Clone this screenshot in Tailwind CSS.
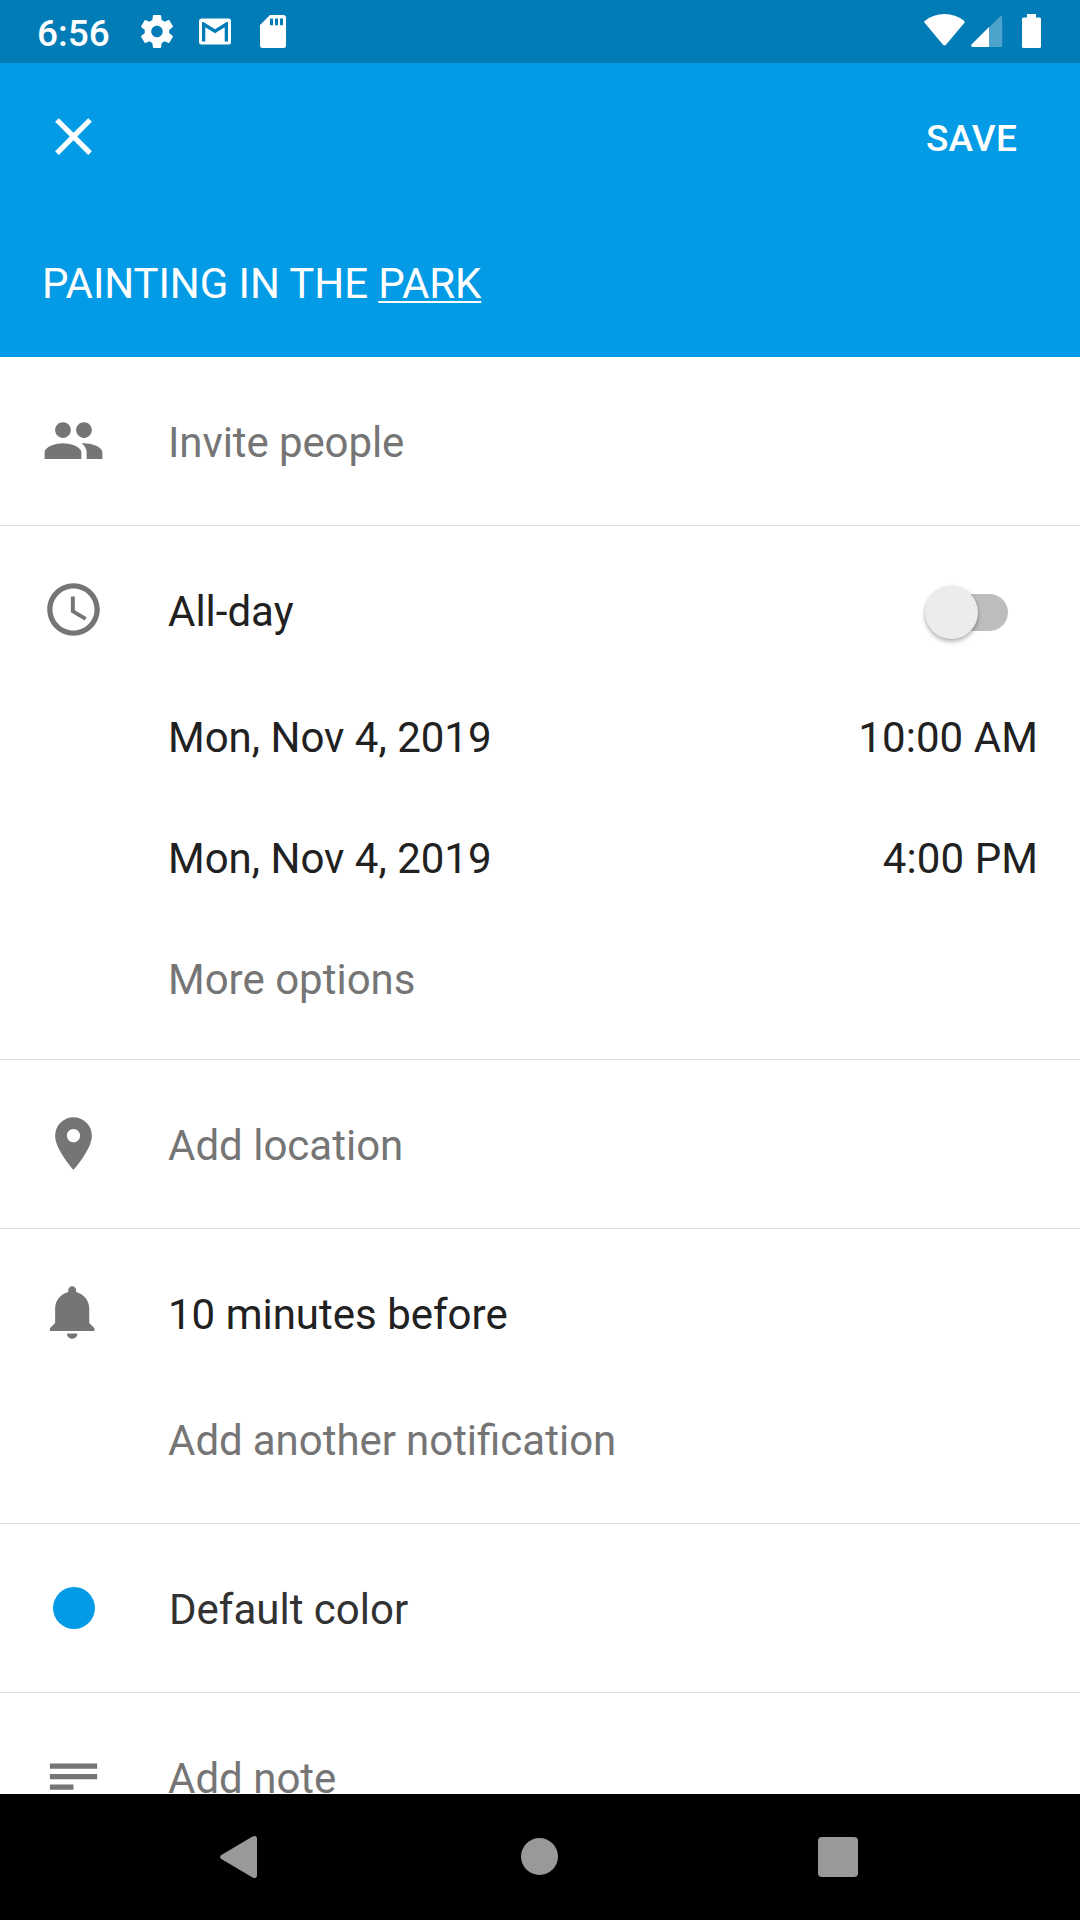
<!DOCTYPE html>
<html lang="en">
<head>
<meta charset="utf-8">
<title>Edit event</title>
<script src="https://cdn.jsdelivr.net/npm/@tailwindcss/browser@4"></script>
</head>
<body class="bg-white">
<div class="flex h-[1920px] w-[1080px] flex-col overflow-hidden bg-white font-[Roboto,sans-serif] text-[42px] leading-[49px] text-[#212121]">

  <!-- Status bar -->
  <div class="flex h-[63px] shrink-0 items-start bg-[#027cb7] pl-[37px] pr-[39px] text-white">
    <span class="mt-[12px] w-[104px] text-[37px] font-medium leading-[43px]">6:56</span>
    <svg class="mt-[15px] h-[33px] w-[32px]" viewBox="2.2 2 19.6 20" preserveAspectRatio="none" fill="currentColor"><path d="M19.43 12.98c.04-.32.07-.64.07-.98s-.03-.66-.07-.98l2.11-1.65c.19-.15.24-.42.12-.64l-2-3.46c-.12-.22-.39-.3-.61-.22l-2.49 1c-.52-.4-1.08-.73-1.69-.98l-.38-2.65C14.46 2.18 14.25 2 14 2h-4c-.25 0-.46.18-.49.42l-.38 2.65c-.61.25-1.17.59-1.69.98l-2.49-1c-.23-.09-.49 0-.61.22l-2 3.46c-.13.22-.07.49.12.64l2.11 1.65c-.04.32-.07.65-.07.98s.03.66.07.98l-2.11 1.65c-.19.15-.24.42-.12.64l2 3.46c.12.22.39.3.61.22l2.49-1c.52.4 1.08.73 1.69.98l.38 2.65c.03.24.24.42.49.42h4c.25 0 .46-.18.49-.42l.38-2.65c.61-.25 1.17-.59 1.69-.98l2.49 1c.23.09.49 0 .61-.22l2-3.46c.12-.22.07-.49-.12-.64l-2.11-1.65zM12 15.5c-1.930 0-3.500-1.570-3.500-3.500s1.570-3.500 3.500-3.500 3.500 1.570 3.500 3.500-1.570 3.500-3.500 3.500z"/></svg>
    <svg class="ml-[26px] mt-[18px] h-[27px] w-[32px]" viewBox="0 0 32 27" fill="currentColor"><path fill-rule="evenodd" d="M3 .5H29.500Q32 .5 32 3V24Q32 26.500 29.500 26.500H2.500Q0 26.500 0 24V3Q0 .5 3 .5ZM3 4V23.500H6.300V9.200L16 15.200L25.700 9.200V23.500H29V4.200L27.600 3.900L16 11.300L4.400 3.900Z"/></svg>
    <svg class="ml-[29px] mt-[15px] h-[33px] w-[26px]" viewBox="0 0 26 33" fill="currentColor"><path fill-rule="evenodd" d="M10 0H23.500Q26 0 26 2.500V30.500Q26 33 23.500 33H2.500Q0 33 0 30.500V10ZM10 3.500V10.300H13V3.500ZM15 3.500V10.300H18V3.500ZM20 3.500V10.300H23V3.500Z"/></svg>
    <svg class="ml-auto mt-[14px] h-[32px] w-[41px]" viewBox="0 0 41 32" fill="currentColor"><path d="M.8 9Q-.3 7.800 1 6.700Q9.500 0 20.500 0T40 6.700Q41.300 7.800 40.200 9L22 30.800Q20.500 32.300 19 30.800Z"/></svg>
    <svg class="ml-[6px] mt-[16px] h-[31px] w-[32px]" viewBox="0 0 32 31" fill="currentColor"><path fill-opacity=".3" d="M18 11.500L28.800 .7Q31.200-.9 31.200 1.500V29.500Q31.200 31 29.700 31H18Z"/><path d="M18 11V31H1.500Q-.5 30.500 .5 28.500Z"/></svg>
    <svg class="ml-[19px] mt-[14px] h-[34px] w-[19px]" viewBox="0 0 19 34" fill="currentColor"><path d="M5 0H14V3.500H17.500Q19 3.500 19 5V32.500Q19 34 17.500 34H1.500Q0 34 0 32.500V5Q0 3.500 1.500 3.500H5Z"/></svg>
  </div>

  <!-- App bar -->
  <header class="h-[294px] shrink-0 bg-[#039be5] text-white">
    <div class="flex h-[147px] items-center justify-between pl-[42px] pr-[63px]">
      <svg class="size-[63px]" viewBox="0 0 24 24" fill="currentColor"><path d="M19 6.410L17.590 5 12 10.590 6.410 5 5 6.410 10.590 12 5 17.590 6.410 19 12 13.410 17.590 19 19 17.590 13.410 12z"/></svg>
      <span class="pt-[3px] text-[37px] font-medium leading-[43px] tracking-[0.2px]">SAVE</span>
    </div>
    <h1 class="pl-[42px] pt-[49px] tracking-[-0.08px]">PAINTING IN THE <span class="underline decoration-2 underline-offset-[3px]">PARK</span></h1>
  </header>

  <!-- Event form -->
  <main class="flex h-[1437px] shrink-0 flex-col overflow-hidden">
    <section class="flex h-[169px] shrink-0 border-b border-[#e0e0e0] pl-[42px] text-[#757575]">
      <svg class="mt-[52px] size-[63px]" viewBox="0 0 24 24" fill="currentColor"><path d="M16 11c1.660 0 2.990-1.340 2.990-3S17.660 5 16 5c-1.660 0-3 1.340-3 3s1.340 3 3 3zm-8 0c1.660 0 2.990-1.340 2.990-3S9.660 5 8 5C6.340 5 5 6.340 5 8s1.340 3 3 3zm0 2c-2.330 0-7 1.170-7 3.500V19h14v-2.500c0-2.330-4.670-3.500-7-3.500zm8 0c-.29 0-.62.02-.97.05 1.160.84 1.970 1.970 1.970 3.450V19h6v-2.500c0-2.330-4.670-3.500-7-3.500z"/></svg>
      <p class="ml-[63px] mt-[61px] tracking-[-0.1px]">Invite people</p>
    </section>

    <section class="flex h-[534px] shrink-0 border-b border-[#e0e0e0] pl-[42px] pr-[42px]">
      <svg class="mt-[52px] size-[63px] shrink-0 text-[#757575]" viewBox="0 0 24 24" fill="currentColor"><path d="M11.990 2C6.470 2 2 6.480 2 12s4.470 10 9.990 10C17.520 22 22 17.520 22 12S17.520 2 11.990 2zM12 20c-4.420 0-8-3.580-8-8s3.580-8 8-8 8 3.580 8 8-3.580 8-8 8z"/><path d="M12.500 7H11v6l5.250 3.150.75-1.230-4.500-2.670z"/></svg>
      <div class="ml-[63px] grow pt-[61px]">
        <div class="flex h-[126px] items-start justify-between">
          <span>All-day</span>
          <span class="-mt-px mr-[30px] flex h-[53px] w-[83px] items-center">
            <span class="z-10 size-[53px] shrink-0 rounded-full bg-[#ececec] shadow-[0_3px_4px_rgba(0,0,0,0.26),0_0_3px_rgba(0,0,0,0.12)]"></span>
            <span class="-ml-[42px] h-[37px] w-[72px] shrink-0 rounded-full bg-[#bdbdbd]"></span>
          </span>
        </div>
        <div class="flex h-[121px] items-start justify-between"><span>Mon, Nov 4, 2019</span><span class="tracking-[0.08px]">10:00 AM</span></div>
        <div class="flex h-[121px] items-start justify-between"><span>Mon, Nov 4, 2019</span><span class="tracking-[0.08px]">4:00 PM</span></div>
        <p class="text-[#757575]">More options</p>
      </div>
    </section>

    <section class="flex h-[169px] shrink-0 border-b border-[#e0e0e0] pl-[42px] text-[#757575]">
      <svg class="mt-[52px] size-[63px]" viewBox="0 0 24 24" fill="currentColor"><path d="M12 2C8.130 2 5 5.130 5 9c0 5.250 7 13 7 13s7-7.750 7-13c0-3.870-3.130-7-7-7zm0 9.500c-1.380 0-2.500-1.120-2.500-2.500s1.120-2.500 2.500-2.500 2.500 1.120 2.500 2.500-1.120 2.500-2.500 2.500z"/></svg>
      <p class="ml-[63px] mt-[61px]">Add location</p>
    </section>

    <section class="flex h-[295px] shrink-0 border-b border-[#e0e0e0] pl-[42px]">
      <svg class="mt-[52px] size-[63px] text-[#757575]" viewBox="0 0 24 24" fill="currentColor"><path d="M11.500 22c1.100 0 2-.9 2-2h-4c0 1.100.9 2 2 2zm6.500-6v-5.500c0-3.070-2.130-5.640-5-6.320V3.500c0-.83-.67-1.500-1.500-1.500S10 2.670 10 3.500v.68c-2.870.68-5 3.250-5 6.320V16l-2 2v1h17v-1l-2-2z"/></svg>
      <div class="ml-[63px] pt-[61px]">
        <p class="h-[126px]">10 minutes before</p>
        <p class="text-[#757575] [word-spacing:-0.5px]">Add another notification</p>
      </div>
    </section>

    <section class="flex h-[169px] shrink-0 border-b border-[#e0e0e0] pl-[53px] text-[#323232]">
      <span class="mt-[63px] size-[42px] rounded-full bg-[#039be5]"></span>
      <p class="ml-[74px] mt-[61px]">Default color</p>
    </section>

    <section class="flex h-[169px] shrink-0 pl-[42px] text-[#757575]">
      <svg class="mt-[52px] size-[63px]" viewBox="0 0 24 24" fill="currentColor"><path d="M3 7h18v2H3zM3 11h18v2H3zM3 15h9v2H3z"/></svg>
      <p class="ml-[63px] mt-[61px]">Add note</p>
    </section>
  </main>

  <!-- System navigation -->
  <nav class="flex h-[126px] shrink-0 items-start bg-black pl-[220px] pt-[42px] text-[#999999]">
    <svg class="h-[42px] w-[37px]" viewBox="0 0 37 42" fill="currentColor"><path d="M1.300 19L32.500 .6Q37-1.300 37 3V39Q37 43.300 32.500 41.400L1.300 23Q-1.200 21 1.300 19Z"/></svg>
    <span class="ml-[264px] mt-[2px] size-[37px] rounded-full bg-[#999999]"></span>
    <span class="ml-[260px] mt-[1px] size-[40px] rounded-[4px] bg-[#999999]"></span>
  </nav>
</div>
</body>
</html>
